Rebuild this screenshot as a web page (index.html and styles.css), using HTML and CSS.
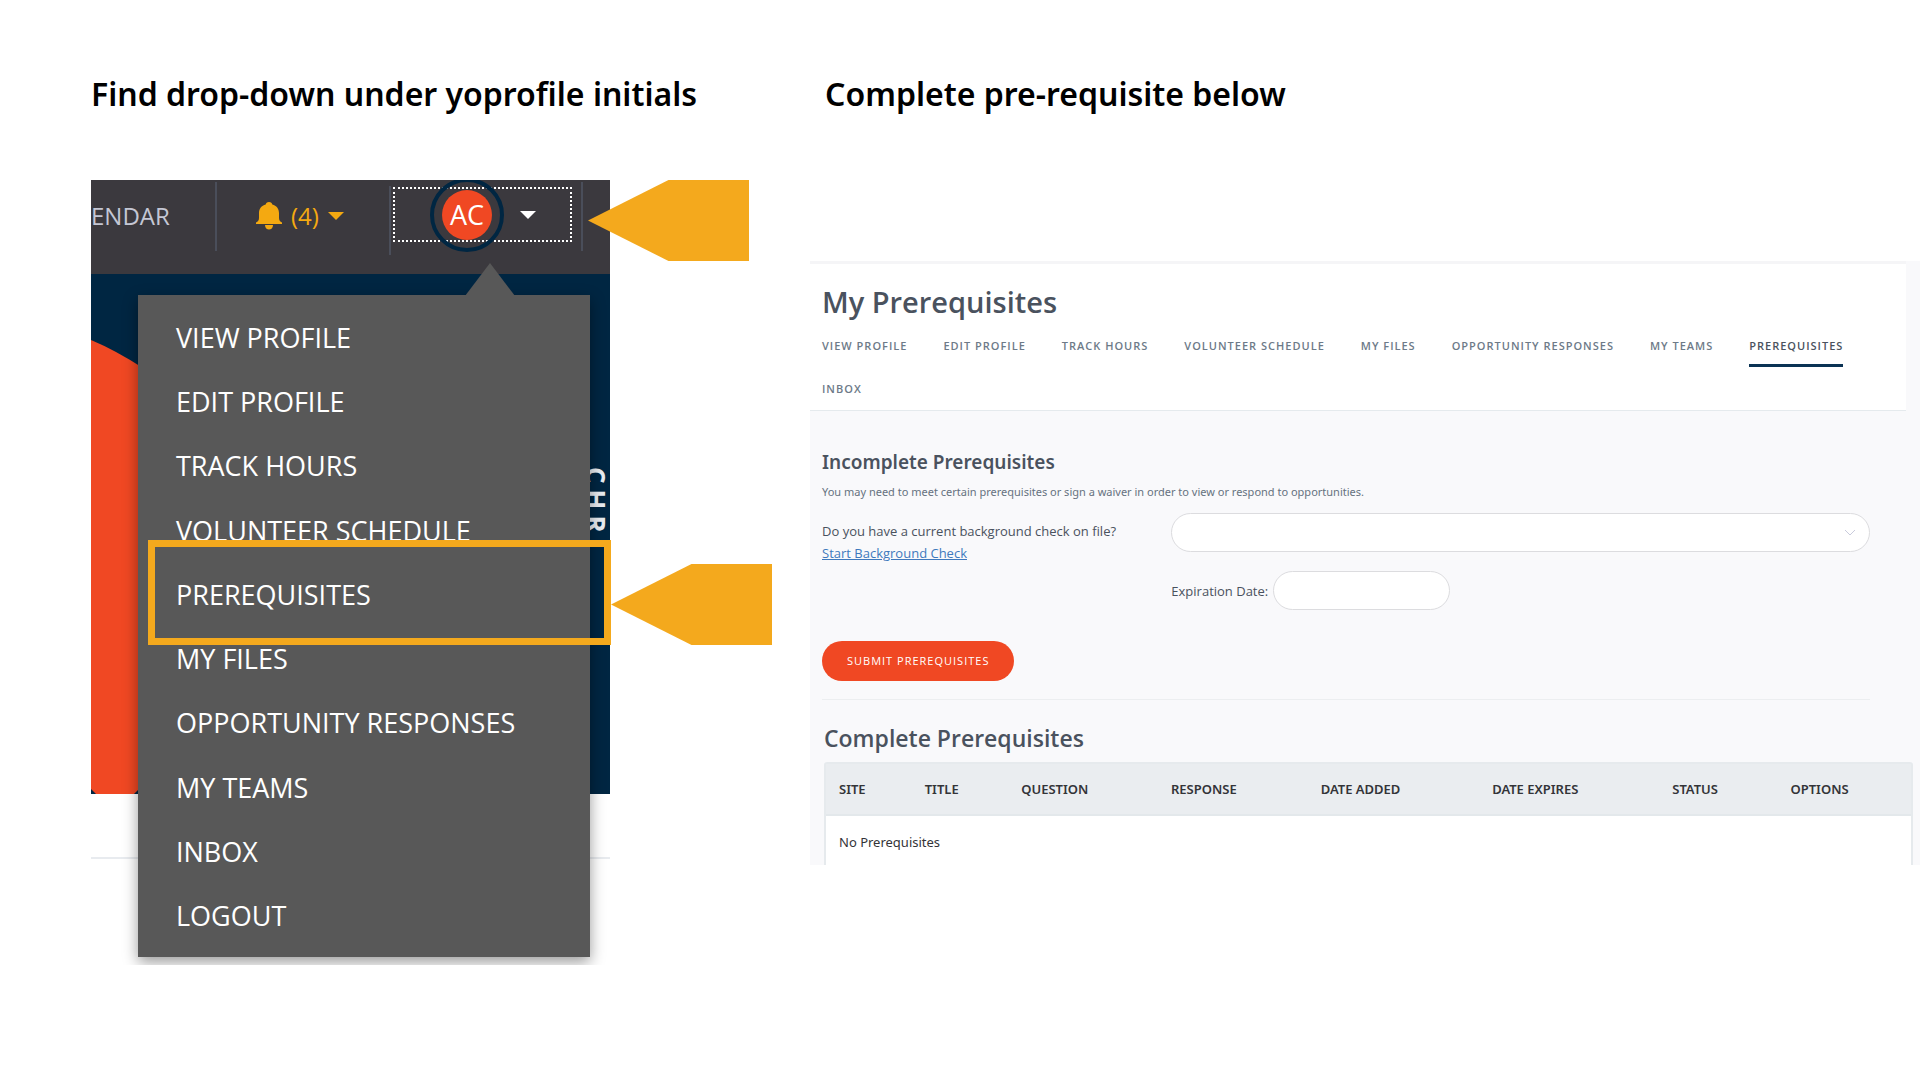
FILE: index.html
```html
<!DOCTYPE html>
<html lang="en">
<head>
<meta charset="utf-8">
<title>Prerequisites guide</title>
<link rel="stylesheet" href="styles.css">
</head>
<body>
<main class="guide">
  <section class="step">
    <h1 class="step-title">Find drop-down under yoprofile initials</h1>
    <div class="figure">
      <header class="topbar">
        <a class="topbar-link" href="#">ENDAR</a>
        <span class="divider"></span>
        <button class="alerts" type="button">
          <svg class="bell" viewBox="0 0 26 28" aria-hidden="true"><path d="M13 0c2 0 3 1 3.300 2.400C20.500 3.600 23 6.500 23 11v5c0 2.500 1 3.500 3 4.600V22H0v-1.400C2 19.500 3 18.500 3 16v-5C3 6.500 5.500 3.600 9.700 2.400 10 1 11 0 13 0zM9 23h8c0 3-2 4.500-4 4.500S9 26 9 23z"/></svg>
          <span>(4)</span>
          <svg class="caret" viewBox="0 0 16 8" aria-hidden="true"><path d="M0 0h16L8 8z"/></svg>
        </button>
        <span class="divider divider-low"></span>
        <button class="account" type="button">
          <span class="ring"><span class="avatar">AC</span></span>
          <svg class="caret" viewBox="0 0 16 8" aria-hidden="true"><path d="M0 0h16L8 8z"/></svg>
        </button>
        <span class="divider"></span>
      </header>
      <div class="hero">
        <svg class="hero-shape" viewBox="0 0 52 454" aria-hidden="true"><path d="M0 0Q24 10 52 28V445L43 454H5L0 449z"/></svg>
        <span class="hero-word">CHR</span>
      </div>
      <div class="below"></div>
      <nav class="menu" aria-label="Profile menu">
        <svg class="menu-tip" viewBox="0 0 50 33" aria-hidden="true"><path d="M25 0L50 33H0z"/></svg>
        <a href="#">VIEW PROFILE</a>
        <a href="#">EDIT PROFILE</a>
        <a href="#">TRACK HOURS</a>
        <a href="#">VOLUNTEER SCHEDULE</a>
        <a href="#">PREREQUISITES</a>
        <a href="#">MY FILES</a>
        <a href="#">OPPORTUNITY RESPONSES</a>
        <a href="#">MY TEAMS</a>
        <a href="#">INBOX</a>
        <a href="#">LOGOUT</a>
      </nav>
      <div class="highlight"></div>
      <div class="pointer pointer-account"></div>
      <div class="pointer pointer-item"></div>
    </div>
  </section>

  <section class="step">
    <h1 class="step-title step-title-inset">Complete pre-requisite below</h1>
    <div class="panel">
      <header class="panel-head">
        <h2 class="panel-title">My Prerequisites</h2>
        <nav class="tabs" aria-label="Profile sections">
          <a href="#">VIEW PROFILE</a>
          <a href="#">EDIT PROFILE</a>
          <a href="#">TRACK HOURS</a>
          <a href="#">VOLUNTEER SCHEDULE</a>
          <a href="#">MY FILES</a>
          <a href="#">OPPORTUNITY RESPONSES</a>
          <a href="#">MY TEAMS</a>
          <a class="current" href="#" aria-current="page">PREREQUISITES</a>
          <a href="#">INBOX</a>
        </nav>
      </header>
      <form class="incomplete">
        <h3 class="incomplete-title">Incomplete Prerequisites</h3>
        <p class="hint">You may need to meet certain prerequisites or sign a waiver in order to view or respond to opportunities.</p>
        <div class="question">
          <div class="question-text">
            <label for="check">Do you have a current background check on file?</label>
            <a href="#">Start Background Check</a>
          </div>
          <div class="answers">
            <div class="select-wrap">
              <select id="check" class="field"><option></option></select>
              <svg class="chevron" viewBox="0 0 12 8" aria-hidden="true"><path d="M1 1l5 5 5-5"/></svg>
            </div>
            <div class="expiry">
              <label for="expires">Expiration Date:</label>
              <input id="expires" class="field" type="text">
            </div>
          </div>
        </div>
        <button class="submit" type="submit">SUBMIT PREREQUISITES</button>
      </form>
      <div class="complete">
        <h3 class="complete-title">Complete Prerequisites</h3>
        <table class="records">
          <colgroup><col class="c-site"><col class="c-title"><col class="c-question"><col class="c-response"><col class="c-added"><col class="c-expires"><col class="c-status"><col></colgroup>
          <thead>
            <tr><th>SITE</th><th>TITLE</th><th>QUESTION</th><th>RESPONSE</th><th>DATE ADDED</th><th>DATE EXPIRES</th><th>STATUS</th><th>OPTIONS</th></tr>
          </thead>
          <tbody>
            <tr><td colspan="8">No Prerequisites</td></tr>
          </tbody>
        </table>
      </div>
    </div>
  </section>
</main>
</body>
</html>
```
FILE: styles.css
```css
* { box-sizing: border-box; }

body {
  margin: 0;
  background: #fff;
  font-family: "Open Sans", "Noto Sans", sans-serif;
  color: #4a525e;
}

h1, h2, h3, p { margin: 0; }
a { color: inherit; text-decoration: none; }
button, input, select { font: inherit; }

.guide {
  display: grid;
  grid-template-columns: minmax(0, 719fr) minmax(0, 1110fr);
  padding: 70px 0 100px 91px;
}

.step-title {
  height: 110px;
  color: #000;
  font: 600 32px/48px "Noto Sans", sans-serif;
  white-space: nowrap;
}
.step-title-inset { padding-left: 15px; }

/* Profile menu */
.figure {
  position: relative;
  width: 519px;
}

.topbar {
  display: flex;
  align-items: flex-start;
  height: 94px;
  padding-top: 2px;
  overflow: hidden;
  background: #3b393e;
  font-size: 24px;
  line-height: 68px;
}
.topbar-link { width: 124px; color: #c4c7d4; }
.divider { width: 2px; height: 69px; background: #4a4e5a; }
.divider-low { margin-top: 4px; }

.alerts {
  display: flex;
  align-items: center;
  gap: 9px;
  width: 172px;
  height: 68px;
  padding: 0 0 0 39px;
  border: 0;
  background: none;
  color: #f4a911;
}
.bell { width: 26px; height: 28px; fill: currentColor; }
.caret { width: 16px; height: 8px; fill: currentColor; }

.account {
  display: flex;
  align-items: center;
  gap: 16px;
  width: 179px;
  height: 55px;
  margin: 5px 9px 0 2px;
  padding: 0 0 0 35px;
  border: 2px dotted #fff;
  background: none;
  color: #fff;
}
.ring {
  display: flex;
  flex: none;
  align-items: center;
  justify-content: center;
  width: 74px;
  height: 74px;
  border: 4px solid #002642;
  border-radius: 50%;
}
.avatar {
  width: 50px;
  height: 50px;
  border-radius: 50%;
  background: #f04823;
  font-size: 27px;
  line-height: 50px;
  text-align: center;
}

.hero {
  position: relative;
  height: 520px;
  overflow: hidden;
  background: #002642;
}
.hero-shape {
  position: absolute;
  left: 0;
  bottom: 0;
  width: 52px;
  height: 454px;
  fill: #f04823;
}
.hero-word {
  position: absolute;
  top: 193px;
  right: 0;
  color: #e9edf2;
  font-size: 26px;
  font-weight: 700;
  line-height: 28px;
  letter-spacing: 6px;
  writing-mode: vertical-rl;
}
.below { height: 65px; border-bottom: 2px solid #e8ebef; }

.menu {
  position: absolute;
  top: 115px;
  left: 47px;
  display: flex;
  flex-direction: column;
  width: 452px;
  height: 662px;
  padding: 10px 0 9px 38px;
  background: #585858;
  box-shadow: 0 5px 14px rgba(0, 0, 0, 0.4);
  color: #fff;
  font-size: 27px;
}
.menu a { display: flex; flex: 1; align-items: center; }
.menu-tip {
  position: absolute;
  top: -32px;
  left: 327px;
  width: 50px;
  height: 33px;
  fill: #585858;
}

.highlight {
  position: absolute;
  top: 360px;
  left: 57px;
  width: 463px;
  height: 105px;
  border: 7px solid #f4a91d;
}
.pointer {
  position: absolute;
  width: 161px;
  height: 81px;
  background: #f4a91d;
  clip-path: polygon(0 50%, 50% 0, 100% 0, 100% 100%, 50% 100%);
}
.pointer-account { top: 0; left: 497px; }
.pointer-item { top: 384px; left: 520px; }

/* Prerequisites page */
.panel {
  height: 604px;
  margin-top: 81px;
  overflow: hidden;
  background: #f9f9fb;
  font-size: 14px;
}
.panel-head {
  margin-right: 14px;
  padding: 16px 36px 0 12px;
  border-top: 3px solid #f5f5f7;
  border-bottom: 1px solid #e5eaed;
  background: #fff;
}
.panel-title { font-size: 29px; font-weight: 600; line-height: 44px; }
.tabs {
  display: flex;
  flex-wrap: wrap;
  column-gap: 36px;
  color: #6d7a88;
  font-size: 11px;
  font-weight: 600;
  letter-spacing: 1px;
  line-height: 36px;
}
.tabs a { padding-top: 4px; border-bottom: 3px solid transparent; }
.tabs .current { border-color: #0b3354; color: #4a525e; }

.incomplete {
  margin: 0 50px 0 12px;
  padding: 37px 0 18px;
  border-bottom: 1px solid #eceef0;
}
.incomplete-title { font-family: "Noto Sans", sans-serif; font-size: 19px; font-weight: 600; line-height: 28px; }
.hint { padding-top: 4px; color: #667280; font-family: "Noto Sans", sans-serif; font-size: 11px; line-height: 24px; }
.question {
  display: grid;
  grid-template-columns: 1fr 2fr;
  padding-top: 9px;
}
.question-text { display: flex; flex-direction: column; align-items: flex-start; padding-top: 7px; font-size: 13px; line-height: 22px; }
.question-text a { color: #3f79bd; text-decoration: underline; }
.answers { display: grid; gap: 19px; font-size: 13px; }
.select-wrap { position: relative; }
.field {
  display: block;
  height: 39px;
  padding: 0 20px;
  border: 1px solid #dcdcdf;
  border-radius: 20px;
  background: #fff;
  appearance: none;
}
.select-wrap .field { width: 100%; }
.chevron {
  position: absolute;
  top: 16px;
  right: 14px;
  width: 12px;
  height: 8px;
  fill: none;
  stroke: #c9cbdc;
}
.expiry { display: flex; align-items: center; gap: 5px; }
.expiry .field { width: 177px; }
.submit {
  height: 40px;
  margin-top: 31px;
  padding: 0 25px 1px;
  border: 0;
  border-radius: 20px;
  background: #f04823;
  color: #fff;
  font-size: 11px;
  font-weight: 500;
  letter-spacing: 1px;
}

.complete { padding: 21px 7px 0 14px; }
.complete-title { font-size: 23px; font-weight: 600; line-height: 34px; }
.records {
  width: 100%;
  margin-top: 7px;
  border: 2px solid #e6eaed;
  border-spacing: 0;
  border-radius: 3px;
  background: #fff;
  color: #333438;
  font-family: "Noto Sans", sans-serif;
  font-size: 13px;
  line-height: 20px;
  table-layout: fixed;
}
.records th, .records td { padding: 0 0 0 13px; text-align: left; white-space: nowrap; }
.records th { height: 52px; border-bottom: 2px solid #e3e8eb; background: #eaedf0; font-weight: 600; }
.records td { height: 52px; }
.c-site { width: 7.9%; }
.c-title { width: 8.9%; }
.c-question { width: 13.8%; }
.c-response { width: 13.8%; }
.c-added { width: 15.8%; }
.c-expires { width: 16.6%; }
.c-status { width: 10.9%; }
```
